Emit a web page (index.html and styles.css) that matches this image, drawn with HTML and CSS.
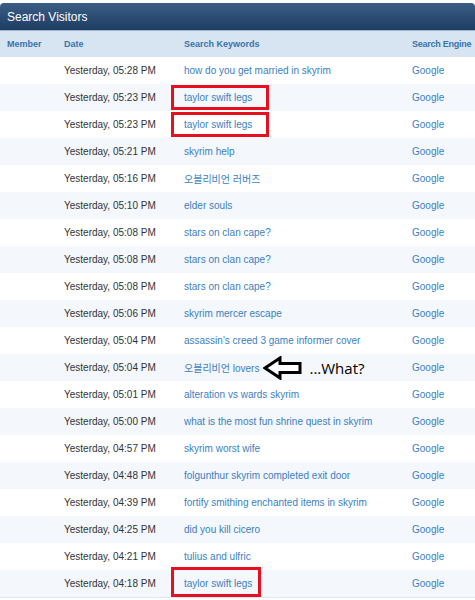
FILE: index.html
```html
<!DOCTYPE html>
<html>
<head>
<meta charset="utf-8">
<link rel="stylesheet" href="styles.css">
</head>
<body>
<div class="panel">
  <div class="title">Search Visitors</div>
  <div class="row head">
    <div>Member</div><div>Date</div><div>Search Keywords</div><div class="eng">Search Engine</div>
  </div>
  <div class="row"><div></div><div class="date">Yesterday, 05:28 PM</div><div class="kw"><a>how do you get married in skyrim</a></div><div class="kw"><a>Google</a></div></div>
  <div class="row alt"><div></div><div class="date">Yesterday, 05:23 PM</div><div class="kw"><a>taylor swift legs</a><span class="box"></span></div><div class="kw"><a>Google</a></div></div>
  <div class="row"><div></div><div class="date">Yesterday, 05:23 PM</div><div class="kw"><a>taylor swift legs</a><span class="box"></span></div><div class="kw"><a>Google</a></div></div>
  <div class="row alt"><div></div><div class="date">Yesterday, 05:21 PM</div><div class="kw"><a>skyrim help</a></div><div class="kw"><a>Google</a></div></div>
  <div class="row"><div></div><div class="date">Yesterday, 05:16 PM</div><div class="kw"><a class="ko">오블리비언 러버즈</a></div><div class="kw"><a>Google</a></div></div>
  <div class="row alt"><div></div><div class="date">Yesterday, 05:10 PM</div><div class="kw"><a>elder souls</a></div><div class="kw"><a>Google</a></div></div>
  <div class="row"><div></div><div class="date">Yesterday, 05:08 PM</div><div class="kw"><a>stars on clan cape?</a></div><div class="kw"><a>Google</a></div></div>
  <div class="row alt"><div></div><div class="date">Yesterday, 05:08 PM</div><div class="kw"><a>stars on clan cape?</a></div><div class="kw"><a>Google</a></div></div>
  <div class="row"><div></div><div class="date">Yesterday, 05:08 PM</div><div class="kw"><a>stars on clan cape?</a></div><div class="kw"><a>Google</a></div></div>
  <div class="row alt"><div></div><div class="date">Yesterday, 05:06 PM</div><div class="kw"><a>skyrim mercer escape</a></div><div class="kw"><a>Google</a></div></div>
  <div class="row"><div></div><div class="date">Yesterday, 05:04 PM</div><div class="kw"><a>assassin's creed 3 game informer cover</a></div><div class="kw"><a>Google</a></div></div>
  <div class="row alt"><div></div><div class="date">Yesterday, 05:04 PM</div><div class="kw"><a class="ko">오블리비언 lovers</a><svg class="arrow" width="40" height="24" viewBox="0 0 40 24"><path d="M2 12 L17 2 L17 7.5 L37 7.5 L37 16.5 L17 16.5 L17 22 Z" fill="#fff" stroke="#000" stroke-width="3" stroke-linejoin="miter"/></svg><span class="what">...What?</span></div><div class="kw"><a>Google</a></div></div>
  <div class="row"><div></div><div class="date">Yesterday, 05:01 PM</div><div class="kw"><a>alteration vs wards skyrim</a></div><div class="kw"><a>Google</a></div></div>
  <div class="row alt"><div></div><div class="date">Yesterday, 05:00 PM</div><div class="kw"><a>what is the most fun shrine quest in skyrim</a></div><div class="kw"><a>Google</a></div></div>
  <div class="row"><div></div><div class="date">Yesterday, 04:57 PM</div><div class="kw"><a>skyrim worst wife</a></div><div class="kw"><a>Google</a></div></div>
  <div class="row alt"><div></div><div class="date">Yesterday, 04:48 PM</div><div class="kw"><a>folgunthur skyrim completed exit door</a></div><div class="kw"><a>Google</a></div></div>
  <div class="row"><div></div><div class="date">Yesterday, 04:39 PM</div><div class="kw"><a>fortify smithing enchanted items in skyrim</a></div><div class="kw"><a>Google</a></div></div>
  <div class="row alt"><div></div><div class="date">Yesterday, 04:25 PM</div><div class="kw"><a>did you kill cicero</a></div><div class="kw"><a>Google</a></div></div>
  <div class="row"><div></div><div class="date">Yesterday, 04:21 PM</div><div class="kw"><a>tulius and ulfric</a></div><div class="kw"><a>Google</a></div></div>
  <div class="row alt last"><div></div><div class="date">Yesterday, 04:18 PM</div><div class="kw"><a>taylor swift legs</a><span class="box short"></span></div><div class="kw"><a>Google</a></div></div>
</div>
</body>
</html>
```

FILE: styles.css
```css
* { box-sizing: border-box; }
body {
  margin: 0;
  background: #fff;
  font-family: "Liberation Sans", Arial, "Noto Sans CJK KR", sans-serif;
  font-size: 10px;
}
.panel {
  width: 475px;
  padding-top: 3px;
}
.title {
  height: 28px;
  padding-left: 7px;
  display: flex;
  align-items: center;
  color: #fff;
  font-size: 12px;
  background: linear-gradient(#3b5d84, #1e3d63);
  border-top-left-radius: 4px;
  border-top-right-radius: 4px;
  border-bottom: 1px solid #9fb6cf;
}
.row {
  display: grid;
  grid-template-columns: 57px 120px 228px 1fr;
  padding-left: 7px;
  height: 27px;
  align-items: stretch;
  background: #fff;
}
.row > div {
  display: flex;
  align-items: center;
  white-space: nowrap;
}
.row.alt { background: #f4f7fb; }
.row.last { border-bottom: 1px solid #dde6ef; height: 28px; }
.row.head {
  height: 26px;
  background: #d7e4f1;
  color: #3a73aa;
  font-weight: bold;
  font-size: 9px;
}
.row.head .eng { letter-spacing: -0.25px; }
.date { color: #333; }
.kw { position: relative; }
.kw a { color: #3a7fc1; }
.ko { font-family: "Liberation Sans", "Noto Sans CJK KR", sans-serif; }
.arrow { margin-left: 4px; }
.what {
  margin-left: 6px;
  font-family: "Open Sans", "Liberation Sans", sans-serif;
  font-size: 15px;
  color: #000;
}
.box {
  position: absolute;
  left: -13px;
  top: 1px;
  width: 98px;
  height: 25px;
  border: 3px solid #e8101f;
}
.box.short { width: 90px; top: -3px; height: 30px; }
```
